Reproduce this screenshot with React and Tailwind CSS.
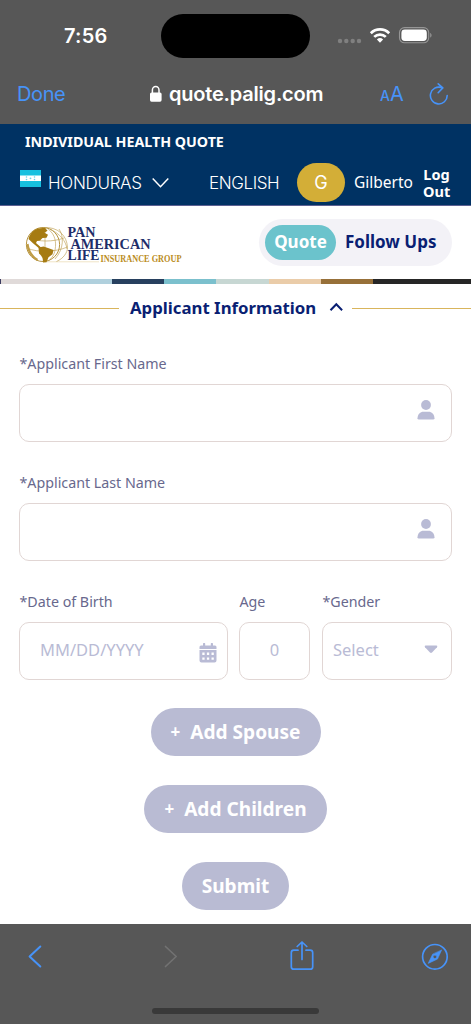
import React from 'react';

const stripes = [
    'w-px bg-[#3b3b60]',
    'w-[59px] bg-[#e0dad9]',
    'w-[52px] bg-[#b0d0dd]',
    'w-[52px] bg-[#27405f]',
    'w-[52px] bg-[#7bc0cd]',
    'w-[53px] bg-[#c7d7d3]',
    'w-[52px] bg-[#eacca9]',
    'w-[52px] bg-[#977039]',
    'flex-1 bg-[#262626]',
];

const StatusBar = () => (
    <div className="flex h-[72px] items-start pt-[14px] text-white">
        <div className="flex h-11 w-[161px] items-center pl-[64px] text-[20px] font-semibold">
            <span className="whitespace-nowrap tracking-[0.2px]">7:56</span>
        </div>
        <div className="h-11 w-[149px] rounded-full bg-black" />
        <svg className="ml-[27px] mt-2" width="100" height="28" viewBox="337 22 100 28" fill="none">
            <g fill="#808080">
                <circle cx="340" cy="41" r="2.2" />
                <circle cx="346.3" cy="41" r="2.2" />
                <circle cx="352.7" cy="41" r="2.2" />
                <circle cx="359" cy="41" r="2.2" />
            </g>
            <g stroke="white" strokeWidth="2.7">
                <path d="M370.8 33.2a13.2 13.2 0 0 1 18.4 0" />
                <path d="M374.2 36.9a8.3 8.3 0 0 1 11.6 0" />
            </g>
            <path d="M376.9 39.5a4.6 4.6 0 0 1 6.2 0L380 42.7z" fill="white" />
            <rect x="399.5" y="27.6" width="29.2" height="15.2" rx="5" stroke="#969696" strokeWidth="1.1" />
            <rect x="401.4" y="29.5" width="25.4" height="11.4" rx="3.4" fill="white" />
            <path d="M430.2 33v4.6c1.8-.7 1.8-3.9 0-4.6" fill="#969696" />
        </svg>
    </div>
);

const AddressBar = () => (
    <div className="flex h-[52px] items-center pb-[8px] text-[20px] text-[#4793f8]">
        <span className="ml-[17px] w-[132px] tracking-[-0.4px]">Done</span>
        <svg width="13" height="18" viewBox="0 0 13 18">
            <rect x="1" y="7.5" width="11.6" height="9.2" rx="1.6" fill="white" />
            <path d="M3.4 8V5a3.3 3.6 0 0 1 6.6 0v3" fill="none" stroke="white" strokeWidth="1.5" />
        </svg>
        <span className="ml-[7px] w-[211px] whitespace-nowrap font-semibold tracking-[-0.2px] text-white">quote.palig.com</span>
        <span className="flex w-[49px] items-baseline whitespace-nowrap">
            <span className="text-[14px] font-medium">A</span>
            <span className="text-[20px]">A</span>
        </span>
        <svg width="20" height="24" viewBox="0 0 20 24" fill="none" stroke="currentColor" strokeWidth="1.6" strokeLinecap="round" strokeLinejoin="round">
            <path d="M18.2 13.5a8.4 8.4 0 1 1-5.6-7.9M9.2 1.8l4.6 4.1-4.6 4.8" />
        </svg>
    </div>
);

const SiteHeader = () => (
    <header className="h-[82px] border-b border-[#5c6092] bg-[#003263] text-white">
        <div className="flex h-[35px] items-center pl-[25px] font-['Noto_Sans'] text-[14.25px] font-bold">
            <span className="whitespace-nowrap">INDIVIDUAL HEALTH QUOTE</span>
        </div>
        <div className="flex h-[47px] items-center">
            <svg className="mb-2 ml-5" width="21" height="17" viewBox="0 0 21 17">
                <rect width="21" height="17" fill="#17c0df" />
                <rect y="5.5" width="21" height="5.5" fill="white" />
                <g fill="#6ad5e9">
                    <circle cx="6.5" cy="7" r=".8" />
                    <circle cx="6.5" cy="9.5" r=".8" />
                    <circle cx="10.5" cy="8.3" r=".9" />
                    <circle cx="14.5" cy="7" r=".8" />
                    <circle cx="14.5" cy="9.5" r=".8" />
                </g>
            </svg>
            <span className="ml-[7px] w-[104px] whitespace-nowrap pt-[2px] text-[17px] font-light tracking-[-0.3px]">HONDURAS</span>
            <svg width="17" height="12" viewBox="0 0 17 12" fill="none" stroke="white" strokeWidth="1.5">
                <path d="M.7 1.5l7.8 8.2 7.8-8.2" />
            </svg>
            <span className="ml-10 w-[88px] whitespace-nowrap pt-[2px] text-[17px] font-light tracking-[-0.4px]">ENGLISH</span>
            <div className="flex h-[39px] w-12 items-center justify-center rounded-full bg-[#d3ae37] text-[18px]">G</div>
            <span className="ml-[9px] w-[69px] pt-px font-['Noto_Sans'] text-[15.5px]">Gilberto</span>
            <span className="w-[27px] text-center font-['Noto_Sans'] text-[14.5px] font-bold leading-[17px]">
                Log Out
            </span>
        </div>
    </header>
);

const Logo = () => (
    <svg width="180" height="46" viewBox="24 223 180 46">
        <ellipse cx="43" cy="244.5" rx="16.6" ry="17" fill="white" stroke="#b6943f" strokeWidth="1" />
        <g fill="none" stroke="#c3a65f" strokeWidth=".7">
            <path d="M46 227.5c8 5 10 12 9.5 19s-3 12-8 14.8M50 229c10 5 16 12 17 20M29 238c10 4 24 4 35 0M26.5 248c12 5 29 4 41-1M45 227.5v34M59 229c5 7 5 20-4 30" />
            <path d="M43 261.8h56" stroke="#ead9ae" />
            <path d="M43 227.5c15-1 24 8 24.5 20 0 5-4 11-11 14" />
        </g>
        <path d="M28.5 239c1-5 4.5-9 9.5-10.5l7-.8 2.5 3-3 2 3.5 2-1.5 3-4 .3-2.5 2.5-3 .5-1 2 4 3.5 2 2.5-3-.8-6-5z" fill="#a67b12" />
        <path d="M38.5 247.5l5-1 4.5 1.6 5.5 1.9-1 4.3-4 3-2 5-3.5.2c0-4-.5-6-4-9z" fill="#a67b12" />
        <path d="M27.5 244c1 8 5 13 10 16" fill="none" stroke="#bf9c45" strokeWidth="2.2" />
        <g fontFamily="Liberation Serif" fontWeight="700" fill="#202d69">
            <text x="67.5" y="237" fontSize="14" textLength="28" lengthAdjust="spacingAndGlyphs">PAN</text>
            <text x="70.5" y="248.5" fontSize="14" textLength="80" lengthAdjust="spacingAndGlyphs">AMERICAN</text>
            <text x="67.5" y="260" fontSize="15" textLength="32" lengthAdjust="spacingAndGlyphs">LIFE</text>
            <text x="100.5" y="262" fontSize="9.5" textLength="81" lengthAdjust="spacingAndGlyphs" fill="#ba8c21">INSURANCE GROUP</text>
        </g>
    </svg>
);

const UserIcon = () => (
    <svg width="18" height="20" viewBox="0 0 18 20" fill="#b9bbd5">
        <circle cx="9" cy="5" r="4.9" />
        <path d="M.5 18.2C.8 14.2 3.2 11.8 6.5 11.8h5c3.3 0 5.7 2.4 6 6.4q0 1.4-1.4 1.4H1.9Q.5 19.6.5 18.2" />
    </svg>
);

const CalendarIcon = () => (
    <svg width="18" height="20" viewBox="0 0 18 20" fill="#b9bbd5">
        <path d="M4 1a1 1 0 0 1 2.2 0v1.500h5.600V1A1 1 0 0 1 14 1v1.500h2q1.500 0 1.500 1.500v2H.5V4q0-1.500 1.500-1.500h2z" />
        <path fillRule="evenodd" d="M.5 7h17v10.500q0 2-2 2h-13q-2 0-2-2zm2.800 2.600v2.300h2.300V9.600zm4.600 0v2.300h2.300V9.600zm4.600 0v2.300h2.300V9.600zM3.300 14.400v2.300h2.300v-2.300zm4.600 0v2.300h2.300v-2.300zm4.600 0v2.300h2.300v-2.300z" />
    </svg>
);

const Field = ({ label, className, boxClass, children }) => (
    <div className={className}>
        <label className="mb-[10px] ml-[0.5px] block h-5 whitespace-nowrap text-[14.25px] leading-5 text-[#68688d]">{label}</label>
        <div className={`flex h-[58px] items-center rounded-[10px] border-[1.5px] border-[#e1d6d4] pb-px text-[16.5px] text-[#b9bbd5] ${boxClass}`}>
            {children}
        </div>
    </div>
);

const PillButton = ({ plus, className, children }) => (
    <button className={`flex h-12 items-center justify-center whitespace-nowrap rounded-full bg-[#b9bbd3] text-[19.1px] font-bold text-white ${className}`}>
        {plus && <span className="mr-[10px] text-[17px]">+</span>}
        {children}
    </button>
);

const BottomBar = () => (
    <footer className="flex h-[100px] flex-col items-center bg-[#575757]">
        <svg width="471" height="66" viewBox="0 924 471 66" fill="none" stroke="#4793f8" strokeWidth="1.7" strokeLinecap="round" strokeLinejoin="round">
            <path d="M40.3 946.5l-10.7 10 10.7 10" strokeWidth="2" />
            <path d="M165.5 946.5l10.7 10-10.7 10" stroke="#727272" />
            <path d="M298 950.2h-4.2q-2.5 0-2.5 2.5v14q0 2.5 2.5 2.5h16.4q2.5 0 2.5-2.5v-14q0-2.5-2.5-2.5H306M302 959.5v-17.3M297.2 946.5l4.8-4.500 4.800 4.500" />
            <circle cx="434.9" cy="956.8" r="12.3" />
            <path fillRule="evenodd" d="M441.5 950.3l-4 8.8-9.3 4.3 4.3-9zM434.9 955a1.8 1.8 0 1 0 0 3.6 1.8 1.8 0 0 0 0-3.6" fill="#4793f8" strokeWidth=".6" />
        </svg>
        <div className="mt-[18px] h-[6px] w-[167px] rounded-full bg-[#393939]" />
    </footer>
);

export default function App() {
    return (
        <div className="h-[1024px] w-[471px] overflow-hidden bg-white font-['Inter']">
            <div className="bg-[#575757]">
                <StatusBar />
                <AddressBar />
            </div>
            <SiteHeader />

            <main className="flex h-[718px] flex-col font-['Noto_Sans']">
                <div className="flex h-[73px] items-start">
                    <div className="ml-6 mt-[17px]">
                        <Logo />
                    </div>
                    <div className="ml-[55px] mt-[13px] flex h-[47px] w-[193px] items-center rounded-full bg-[#f3f2f7] pl-[6px] text-[17px] font-bold">
                        <span className="flex h-[35px] w-[71px] items-center justify-center rounded-full bg-[#6bc3cc] pb-px text-white">Quote</span>
                        <span className="ml-[9px] whitespace-nowrap pb-px text-[#0a1f73]">Follow Ups</span>
                    </div>
                </div>
                <div className="flex h-[5px]">
                    {stripes.map((stripe) => (
                        <div key={stripe} className={stripe} />
                    ))}
                </div>

                <div className="flex h-[46px] items-center text-[#0a1f73]">
                    <div className="mt-[2px] h-px w-[119px] bg-[#d9b55c]" />
                    <h2 className="ml-[11px] w-[199px] whitespace-nowrap pt-px text-[16.8px] font-bold">Applicant Information</h2>
                    <svg width="14" height="10" viewBox="0 0 14 10" fill="none" stroke="currentColor" strokeWidth="2">
                        <path d="M1.5 8.3L7.3 2.3l5.8 6" />
                    </svg>
                    <div className="ml-[9px] mt-[2px] h-px flex-1 bg-[#d9b55c]" />
                </div>

                <div className="mt-6 flex flex-col gap-[31px] px-[19px]">
                    <Field label="*Applicant First Name" boxClass="justify-end pr-[16px]">
                        <span className="mb-[5px]"><UserIcon /></span>
                    </Field>
                    <Field label="*Applicant Last Name" boxClass="justify-end pr-[16px]">
                        <span className="mb-[5px]"><UserIcon /></span>
                    </Field>
                    <div className="flex">
                        <Field label="*Date of Birth" className="mr-[11px] w-[209px]" boxClass="justify-between pl-[20px] pr-[10px]">
                            <span>MM/DD/YYYY</span>
                            <span className="mt-1"><CalendarIcon /></span>
                        </Field>
                        <Field label="Age" className="mr-3 w-[71px]" boxClass="justify-center">0</Field>
                        <Field label="*Gender" className="flex-1" boxClass="justify-between pl-[10px] pr-[13px]">
                            <span>Select</span>
                            <svg className="mb-[2px]" width="14" height="9" viewBox="0 0 14 9" fill="#b9bbd5">
                                <path d="M1.5.5h11q1.5.3.5 1.7L8 7.5q-1 .8-2 0L1 2.2Q0 .8 1.5.5" />
                            </svg>
                        </Field>
                    </div>
                </div>

                <div className="mt-7 flex flex-col items-center gap-[29px]">
                    <PillButton plus className="w-[170px]">Add Spouse</PillButton>
                    <PillButton plus className="w-[183px]">Add Children</PillButton>
                    <PillButton className="w-[107px]">Submit</PillButton>
                </div>
            </main>

            <BottomBar />
        </div>
    );
}
